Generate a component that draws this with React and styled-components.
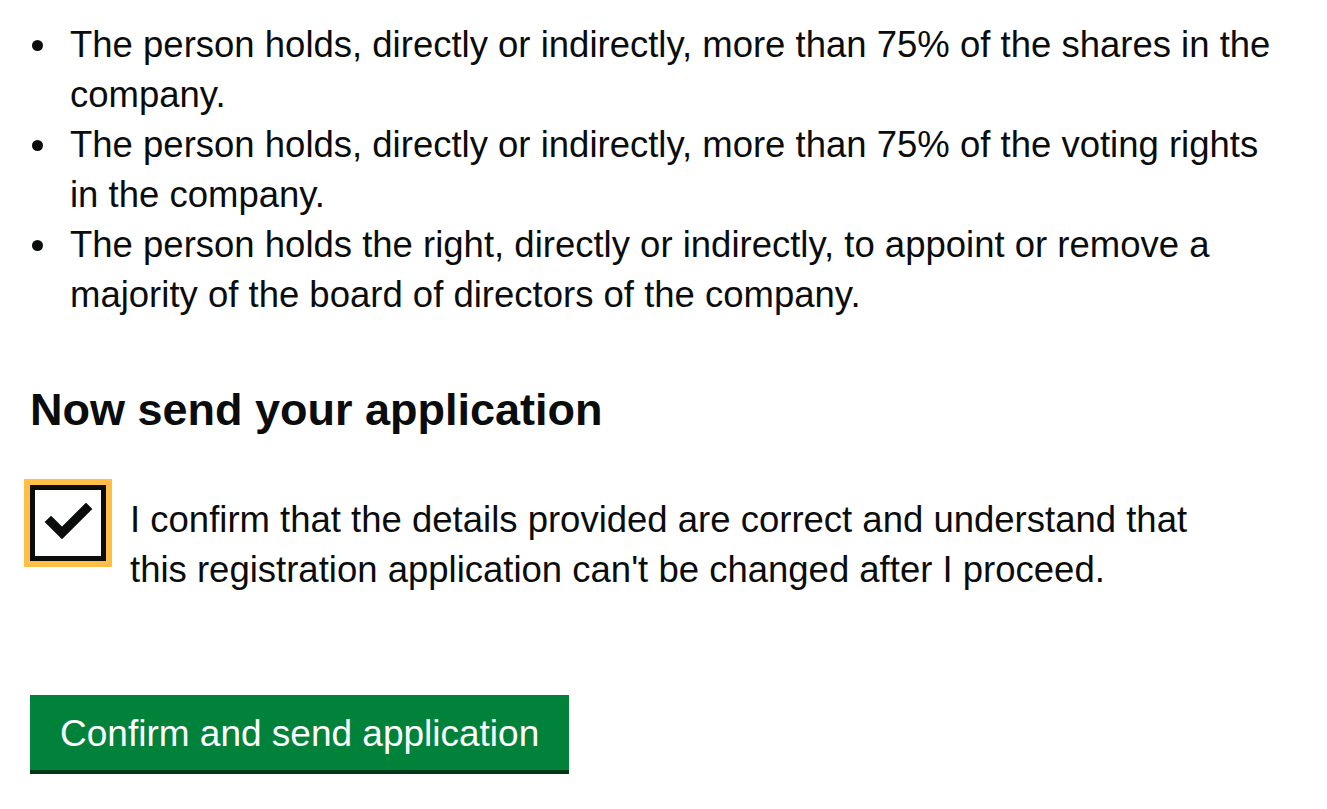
import React from "react";
import styled, { createGlobalStyle } from "styled-components";

const GlobalStyle = createGlobalStyle`
  html, body {
    margin: 0;
    padding: 0;
    background: #ffffff;
  }
  body {
    font-family: "Liberation Sans", Arial, sans-serif;
    color: #0b0c0c;
  }
`;

const Page = styled.main`
  padding: 20px 30px 0 30px;
  max-width: 1255px;
`;

const BulletList = styled.ul`
  margin: 0;
  padding-left: 40px;
  list-style: none;
`;

const Item = styled.li`
  position: relative;
  font-size: 36.5px;
  line-height: 50px;

  &::before {
    content: "";
    position: absolute;
    left: -38px;
    top: 20px;
    width: 11px;
    height: 11px;
    border-radius: 50%;
    background: #0b0c0c;
  }
`;

const Heading = styled.h2`
  margin: 60px 0 0 0;
  font-size: 45px;
  line-height: 60px;
  font-weight: 700;
`;

const CheckRow = styled.label`
  display: flex;
  align-items: flex-start;
  gap: 24px;
  margin-top: 45px;
  cursor: pointer;
`;

const Box = styled.span`
  flex: 0 0 auto;
  box-sizing: border-box;
  width: 76px;
  height: 76px;
  border: 5px solid #0b0c0c;
  background: #ffffff;
  outline: 6px solid ${(p) => (p.$focused ? "#ffbf47" : "transparent")};
  display: flex;
  align-items: center;
  justify-content: center;
`;

const LabelText = styled.span`
  display: block;
  max-width: 1100px;
  padding-top: 10px;
  font-size: 36.5px;
  line-height: 50px;
`;

const Button = styled.button`
  display: inline-block;
  margin-top: 100px;
  padding: 14px 30px 11px 30px;
  border: 0;
  border-bottom: 4px solid #003618;
  border-radius: 0;
  background: #00823b;
  color: #ffffff;
  font-family: "Liberation Sans", Arial, sans-serif;
  font-size: 37px;
  line-height: 50px;
  cursor: pointer;
`;

const Tick = () => (
  <svg width="50" height="40" viewBox="0 0 50 40" aria-hidden="true">
    <polyline
      points="8,19 19,30 43,6"
      fill="none"
      stroke="#0b0c0c"
      strokeWidth="9"
      strokeLinecap="square"
    />
  </svg>
);

const conditions = [
  "The person holds, directly or indirectly, more than 75% of the shares in the company.",
  "The person holds, directly or indirectly, more than 75% of the voting rights in the company.",
  "The person holds the right, directly or indirectly, to appoint or remove a majority of the board of directors of the company.",
];

export default function App() {
  return (
    <>
      <GlobalStyle />
      <Page>
        <BulletList>
          {conditions.map((text) => (
            <Item key={text}>{text}</Item>
          ))}
        </BulletList>

        <Heading>Now send your application</Heading>

        <CheckRow>
          <Box $focused>
            <Tick />
          </Box>
          <LabelText>
            I confirm that the details provided are correct and understand that
            this registration application can't be changed after I proceed.
          </LabelText>
        </CheckRow>

        <Button type="button">Confirm and send application</Button>
      </Page>
    </>
  );
}
